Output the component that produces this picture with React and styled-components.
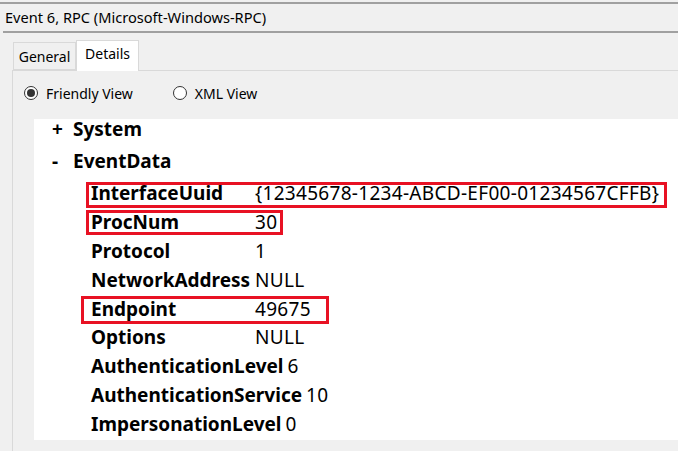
import React from 'react'
import styled, { createGlobalStyle } from 'styled-components';

const GlobalStyle = createGlobalStyle`
  html, body { margin: 0; padding: 0; background: #f0f0f0; }
  body { font-family: "Noto Sans", "Open Sans", sans-serif; color: #000; }
`

const Window = styled.div`
  width: 678px;
  height: 451px;
  overflow: hidden;
  background: #f0f0f0;
  border-top: 2px solid #a0a0a0;
  margin-top: 2px;
  box-sizing: border-box;
`

const TitleBar = styled.div`
  height: 27px;
  margin-left: 3px;
  padding-left: 2px;
  font-size: 14.6px;
  line-height: 27px;
  border-bottom: 2px solid #a0a0a0;
`

const TabRow = styled.div`
  display: flex;
  align-items: flex-end;
  height: 37px;
  padding-left: 13px;
  position: relative;
  z-index: 1;
`

const Tab = styled.div`
  box-sizing: border-box;
  width: 63px;
  height: ${(p) => (p.$active ? '31px' : '28px')};
  margin-bottom: ${(p) => (p.$active ? '-1px' : '0')};
  background: ${(p) => (p.$active ? '#ffffff' : '#f0f0f0')};
  border: 1px solid #d9d9d9;
  border-bottom: ${(p) => (p.$active ? 'none' : '1px solid #d9d9d9')};
  font-size: 14px;
  text-align: center;
  line-height: ${(p) => (p.$active ? '26px' : '28px')};
`

const Panel = styled.div`
  margin-left: 12px;
  border-top: 1px solid #d9d9d9;
  border-left: 1px solid #d9d9d9;
  height: 400px;
`

const Options = styled.div`
  display: flex;
  align-items: center;
  height: 44px;
  margin-bottom: 4px;
  padding-left: 11px;
  font-size: 14px;
`

const Radio = styled.label`
  display: flex;
  align-items: center;
  gap: 8px;
  margin-right: 40px;
`

const RadioDot = styled.span`
  box-sizing: border-box;
  width: 14px;
  height: 14px;
  border-radius: 50%;
  border: 1px solid #333;
  background: #fff;
  display: flex;
  align-items: center;
  justify-content: center;
  &::after {
    content: '';
    display: ${(p) => (p.$checked ? 'block' : 'none')};
    width: 8px;
    height: 8px;
    border-radius: 50%;
    background: #333;
  }
`

const Content = styled.div`
  display: flow-root;
  margin-left: 21px;
  background: #fff;
  height: 321px;
  font-size: 19px;
`

const Scroller = styled.div`
  margin-top: -6px;
`

const Node = styled.div`
  display: flex;
  align-items: center;
  height: 32px;
  padding-left: 18px;
  font-weight: 700;
`

const Toggle = styled.span`
  width: 21px;
`

const Rows = styled.div`
  padding-left: 57px;
  padding-top: 2px;
`

const Row = styled.div`
  position: relative;
  display: flex;
  align-items: center;
  height: 28.8px;
  &::after {
    content: '';
    display: ${(p) => (p.$box ? 'block' : 'none')};
    position: absolute;
    top: ${(p) => (p.$box ? p.$box.top : 0)}px;
    bottom: ${(p) => (p.$box ? p.$box.bottom : 0)}px;
    left: ${(p) => (p.$box ? p.$box.left : 0)}px;
    width: ${(p) => (p.$box ? p.$box.width : 0)}px;
    border: 3px solid #e81123;
    box-sizing: border-box;
  }
`

const Label = styled.span`
  font-weight: 700;
  min-width: 160px;
  padding-right: 4px;
  white-space: nowrap;
`

const Value = styled.span`
  white-space: nowrap;
  letter-spacing: 0.3px;
`

const data = [
  ['InterfaceUuid', '{12345678-1234-ABCD-EF00-01234567CFFB}', { left: -5, width: 581, top: 2.5, bottom: 0 }],
  ['ProcNum', '30', { left: -5, width: 197, top: 2.5, bottom: 1.5 }],
  ['Protocol', '1'],
  ['NetworkAddress', 'NULL'],
  ['Endpoint', '49675', { left: -10, width: 248, top: 1.5, bottom: -1.5 }],
  ['Options', 'NULL'],
  ['AuthenticationLevel', '6'],
  ['AuthenticationService', '10'],
  ['ImpersonationLevel', '0'],
]

const App = () => {
  return (
    <>
      <GlobalStyle />
      <Window>
        <TitleBar>Event 6, RPC (Microsoft-Windows-RPC)</TitleBar>
        <TabRow>
          <Tab>General</Tab>
          <Tab $active>Details</Tab>
        </TabRow>
        <Panel>
          <Options>
            <Radio><RadioDot $checked />Friendly View</Radio>
            <Radio><RadioDot />XML View</Radio>
          </Options>
          <Content>
            <Scroller>
              <Node><Toggle>+</Toggle>System</Node>
              <Node><Toggle>-</Toggle>EventData</Node>
              <Rows>
                {data.map(([k, v, box]) => (
                  <Row key={k} $box={box}>
                    <Label>{k}</Label>
                    <Value>{v}</Value>
                  </Row>
                ))}
              </Rows>
            </Scroller>
          </Content>
        </Panel>
      </Window>
    </>
  )
}

export default App
